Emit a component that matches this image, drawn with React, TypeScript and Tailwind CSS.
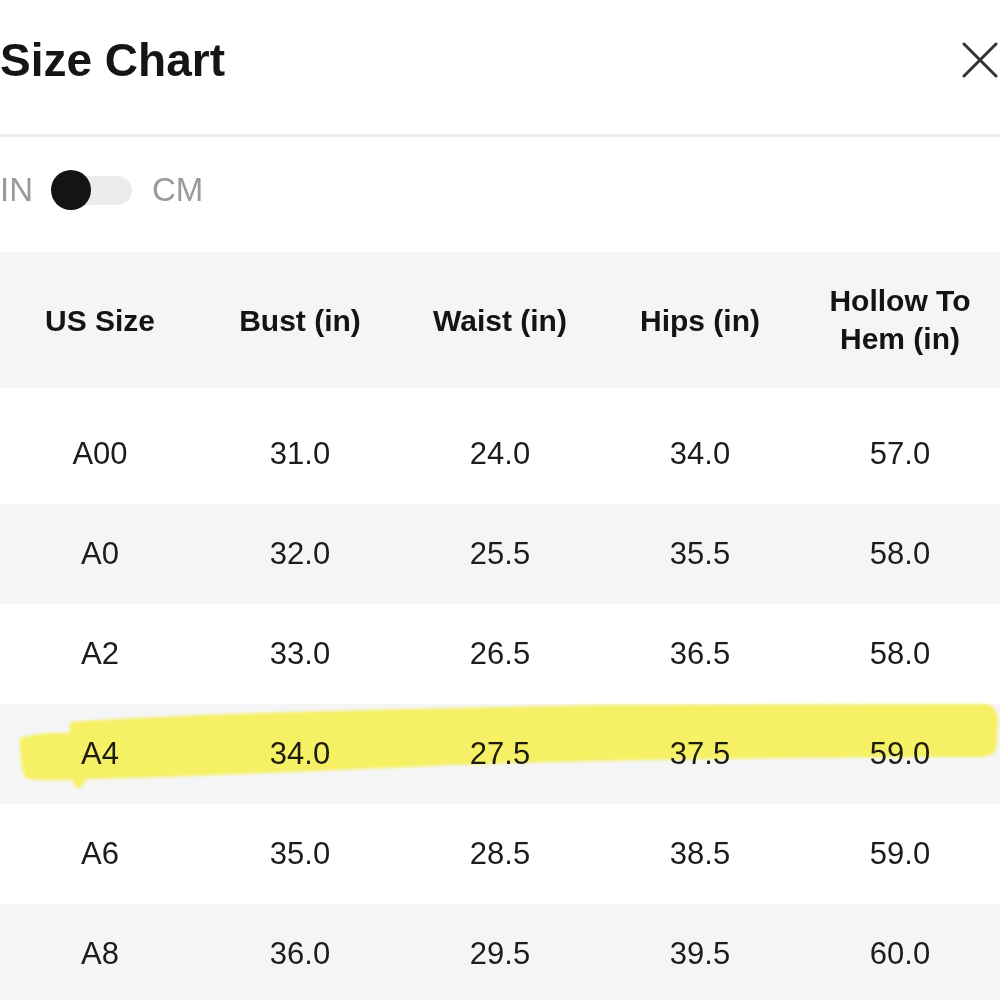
const header = ["US Size", "Bust (in)", "Waist (in)", "Hips (in)"];

const rows = [
  ["A00", "31.0", "24.0", "34.0", "57.0"],
  ["A0", "32.0", "25.5", "35.5", "58.0"],
  ["A2", "33.0", "26.5", "36.5", "58.0"],
  ["A4", "34.0", "27.5", "37.5", "59.0"],
  ["A6", "35.0", "28.5", "38.5", "59.0"],
  ["A8", "36.0", "29.5", "39.5", "60.0"],
];

const Highlight = () => (
  <svg
    className="absolute left-0 top-0 pointer-events-none mix-blend-multiply"
    width="1000"
    height="1000"
    viewBox="0 0 1000 1000"
  >
    <defs>
      <filter id="soft" x="-5%" y="-50%" width="110%" height="200%">
        <feGaussianBlur stdDeviation="1.8" />
      </filter>
    </defs>
    <g filter="url(#soft)" fill="#fffa60" opacity="0.95">
      <path d="M 20 738 Q 40 732 72 733 L 78 779 Q 45 782 25 778 Q 19 760 20 738 Z" />
      <path d="M 70 722 C 200 713 400 709 600 705 L 985 704 Q 999 706 998 725 L 996 750 Q 992 757 978 757 C 800 757 600 760 450 765 C 300 772 150 778 86 779 Q 82 791 76 787 Q 70 780 69 768 Z" />
    </g>
  </svg>
);

const App = () => {
  return (
    <div className="relative w-[1000px] h-[1000px] overflow-hidden bg-white font-['Liberation_Sans',Arial,sans-serif]">
      <div className="flex items-start justify-between h-[137px] pt-[37px] border-b-[3px] border-[#ececec]">
        <h1 className="text-[46px] leading-[46px] font-bold text-[#151515]">Size Chart</h1>
        <svg className="mt-[5px] mr-[2px]" width="36" height="36" viewBox="0 0 36 36">
          <path d="M2 2 L34 34 M34 2 L2 34" stroke="#333" strokeWidth="3" strokeLinecap="round" />
        </svg>
      </div>

      <div className="flex items-center h-[106px] text-[33px] text-[#9a9a9a]">
        <span className="w-[31px]">IN</span>
        <div className="relative ml-[20px] w-[81px] h-[40px] flex items-center">
          <div className="ml-[9px] w-[72px] h-[29px] rounded-full bg-[#ececec]" />
          <div className="absolute left-0 top-0 w-[40px] h-[40px] rounded-full bg-[#141414]" />
        </div>
        <span className="ml-[20px]">CM</span>
      </div>

      <div className="mt-[9px]">
        <div className="grid grid-cols-5 h-[136px] bg-[#f5f5f5] text-[30px] font-bold text-[#141414]">
          {header.map((h) => (
            <div key={h} className="flex items-center justify-center">
              {h}
            </div>
          ))}
          <div className="flex items-center justify-center text-center leading-[38px]">
            Hollow To
            <br />
            Hem (in)
          </div>
        </div>
        <div className="pt-4">
          {rows.map((r, i) => (
            <div
              key={r[0]}
              className={`grid grid-cols-5 h-[100px] text-[31px] text-[#1c1c1c] ${
                i % 2 === 1 ? "bg-[#f5f5f5]" : "bg-white"
              }`}
            >
              {r.map((c, j) => (
                <div key={j} className="flex items-center justify-center">
                  {c}
                </div>
              ))}
            </div>
          ))}
        </div>
      </div>

      <Highlight />
    </div>
  );
};

export default App;
